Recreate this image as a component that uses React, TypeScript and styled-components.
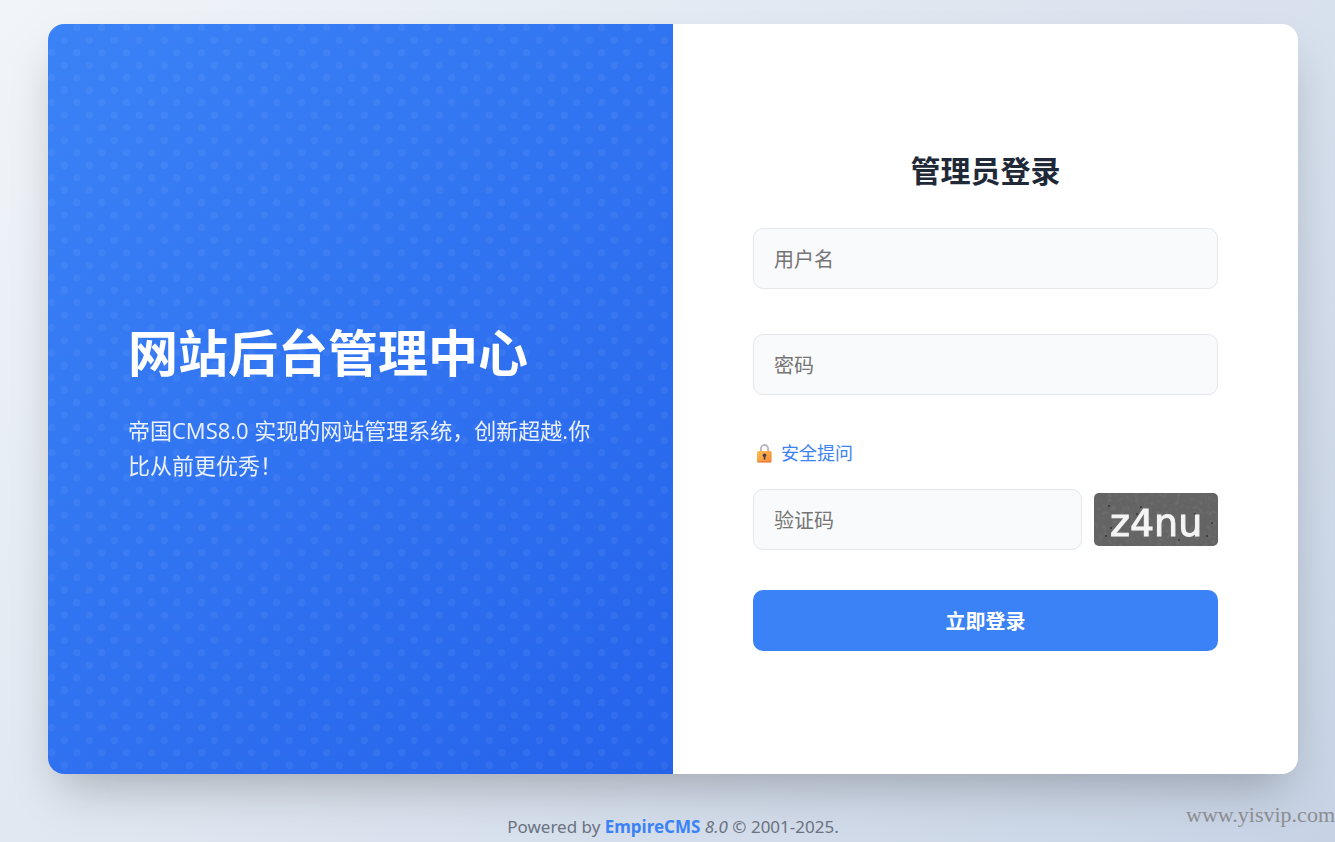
import React from "react";
import styled, { createGlobalStyle } from "styled-components";

const GlobalStyle = createGlobalStyle`
  *, *::before, *::after { box-sizing: border-box; }
  body {
    margin: 0;
    font-family: "Open Sans", "Noto Sans CJK SC", sans-serif;
    background: #d9e1ec;
  }
`;

const Page = styled.div`
  position: relative;
  min-height: 100vh;
  padding: 24px 37px 0 48px;
  display: flex;
  flex-direction: column;
  align-items: center;
  background: linear-gradient(135deg, #f1f5f9 0%, #c7d3e5 100%);
`;

const Card = styled.main`
  display: grid;
  grid-template-columns: 1fr 1fr;
  width: 100%;
  max-width: 1250px;
  min-height: 750px;
  border-radius: 16px;
  overflow: hidden;
  background: #ffffff;
  box-shadow: 0 24px 48px -12px rgba(0, 0, 0, 0.25);
`;

const Intro = styled.section`
  display: flex;
  flex-direction: column;
  justify-content: center;
  padding: 88px 80px 80px;
  color: #ffffff;
  background:
    radial-gradient(ellipse 15% 15% at 15% 15%, rgba(255, 255, 255, 0.05) 92%, transparent 106%) 0 0 / 25px 25px,
    radial-gradient(ellipse 15% 15% at 65% 65%, rgba(255, 255, 255, 0.05) 92%, transparent 106%) 0 0 / 25px 25px,
    linear-gradient(135deg, #3b82f6 0%, #2563eb 100%);
`;

const IntroTitle = styled.h1`
  margin: 0 0 30px;
  font-size: 50px;
  line-height: 60px;
  font-weight: 700;
`;

const IntroText = styled.p`
  margin: 0;
  font-size: 22px;
  line-height: 35px;
  opacity: 0.9;
`;

const FormPanel = styled.section`
  display: flex;
  flex-direction: column;
  justify-content: center;
  padding: 80px;
`;

const FormTitle = styled.h2`
  margin: 0 0 33px;
  font-size: 30px;
  line-height: 48px;
  font-weight: 700;
  text-align: center;
  color: #1f2937;
`;

const Form = styled.form`
  display: flex;
  flex-direction: column;
`;

const Field = styled.input<{ $spaced?: boolean }>`
  flex: 1 1 auto;
  min-width: 0;
  height: 61px;
  margin: 0 0 ${(p) => (p.$spaced ? "45px" : "0")};
  padding: 2px 20px 0;
  border: 1px solid #e5e7eb;
  border-radius: 10px;
  background: #f9fafb;
  font: inherit;
  font-size: 20px;
  color: #1f2937;
  &::placeholder { color: #757575; opacity: 1; }
  &:focus { outline: 2px solid #3b82f6; }
`;

const QuestionLink = styled.a`
  align-self: flex-start;
  display: flex;
  align-items: center;
  gap: 8px;
  margin: 0 0 22px;
  padding-left: 3px;
  font-size: 18px;
  line-height: 27px;
  color: #3b82f6;
  text-decoration: none;
`;

const CodeRow = styled.div`
  display: flex;
  align-items: center;
  gap: 12px;
  margin-bottom: 40px;
`;

const Captcha = styled.svg`
  flex: none;
  width: 124px;
  height: 53px;
  border-radius: 5px;
  background: #646464;
`;

const Submit = styled.button`
  height: 61px;
  border: 0;
  border-radius: 10px;
  background: #3b82f6;
  color: #ffffff;
  font: inherit;
  font-size: 20px;
  font-weight: 700;
  cursor: pointer;
`;

const Footer = styled.footer`
  margin-top: 39px;
  font-family: "Noto Sans", "Noto Sans CJK SC", sans-serif;
  font-size: 17px;
  line-height: 28px;
  color: #6b7280;
`;

const BrandLink = styled.a`
  color: #3b82f6;
  font-weight: 700;
  text-decoration: none;
`;

const Watermark = styled.span`
  position: absolute;
  right: 0;
  bottom: 14px;
  font-family: "Liberation Serif", serif;
  font-size: 22px;
  line-height: 26px;
  color: #8b8d91;
`;

const LockIcon = () => (
  <svg width="17" height="20" viewBox="0 0 17 20" aria-hidden="true">
    <defs>
      <linearGradient id="lockBody" x1="0" y1="0" x2="1" y2="1">
        <stop offset="0" stopColor="#fdc04e" />
        <stop offset="1" stopColor="#f2873d" />
      </linearGradient>
    </defs>
    <path d="M4.9 8.5V4.6a3.6 3.6 0 0 1 7.2 0V8.5" fill="none" stroke="#b9b4bd" strokeWidth="1.8" />
    <rect x="1" y="7" width="14.6" height="11.6" rx="1.5" fill="url(#lockBody)" />
    <path d="M1.4 17.8h13.8" stroke="#e0743c" strokeWidth="0.9" />
    <circle cx="8.5" cy="11.2" r="1.8" fill="#4b3a4c" />
    <path d="M7.7 11.5h1.7v4H7.7z" fill="#4b3a4c" />
  </svg>
);

const Speckles = () => (
  <filter id="speckles" x="0" y="0" width="100%" height="100%">
    <feTurbulence type="fractalNoise" baseFrequency="0.22" numOctaves="2" seed="4" />
    <feColorMatrix values="0 0 0 0 0.2  0 0 0 0 0.2  0 0 0 0 0.2  3 0 0 0 -1.5" />
  </filter>
);

const specks = [
  [14, 12], [46, 13], [42, 20], [16, 34], [11, 42], [100, 20], [117, 29], [112, 42], [84, 46],
];

const App = () => (
  <>
    <GlobalStyle />
    <Page>
      <Card>
        <Intro>
          <IntroTitle>网站后台管理中心</IntroTitle>
          <IntroText>帝国CMS8.0 实现的网站管理系统，创新超越.你比从前更优秀！</IntroText>
        </Intro>
        <FormPanel>
          <FormTitle>管理员登录</FormTitle>
          <Form onSubmit={(e) => e.preventDefault()}>
            <Field $spaced type="text" placeholder="用户名" aria-label="用户名" />
            <Field $spaced type="password" placeholder="密码" aria-label="密码" />
            <QuestionLink href="#question">
              <LockIcon />
              安全提问
            </QuestionLink>
            <CodeRow>
              <Field type="text" placeholder="验证码" aria-label="验证码" />
              <Captcha viewBox="0 0 124 53" role="img" aria-label="z4nu">
                <defs>
                  <Speckles />
                  <filter id="soften">
                    <feGaussianBlur stdDeviation="0.6" />
                  </filter>
                </defs>
                <rect width="124" height="53" filter="url(#speckles)" opacity="0.5" />
                <g filter="url(#soften)">
                  {specks.map(([x, y]) => (
                    <rect key={`${x}-${y}`} x={x} y={y} width="2" height="2" fill="#3f3f3f" />
                  ))}
                  <text
                    x="16"
                    y="43"
                    fontFamily="DejaVu Sans"
                    fontSize="38"
                    fill="#f4f4f4"
                    stroke="#f4f4f4"
                    strokeWidth="1"
                  >
                    z4nu
                  </text>
                </g>
              </Captcha>
            </CodeRow>
            <Submit type="submit">立即登录</Submit>
          </Form>
        </FormPanel>
      </Card>
      <Footer>
        Powered by <BrandLink href="#empirecms">EmpireCMS</BrandLink> <em>8.0</em> © 2001-2025.
      </Footer>
      <Watermark>www.yisvip.com</Watermark>
    </Page>
  </>
);

export default App;
